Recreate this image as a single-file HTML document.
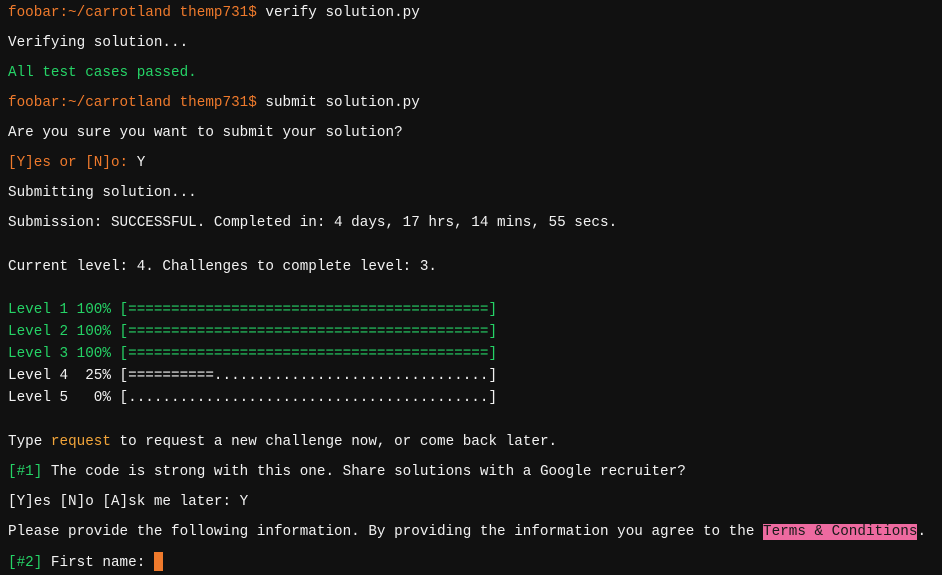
<!DOCTYPE html>
<html><head><meta charset="utf-8"><style>
html,body{margin:0;padding:0;background:#111;width:942px;height:575px;overflow:hidden}
body{font-family:"Liberation Mono","DejaVu Sans Mono",monospace;font-size:14.3px;color:#f2f2f2}
.l{position:absolute;left:8px;white-space:pre;line-height:20px;height:20px}
.o{color:#ef7a2c}.g{color:#25d366}.y{color:#f2a53a}
.t{background:#ee6aa0;color:#1a1a1a}
.cur{display:inline-block;width:9px;height:19px;background:#ef7a2c;vertical-align:-5px}
</style></head><body>
<div class="l" style="top:3px"><span class="o">foobar:~/carrotland themp731$</span> verify solution.py</div>
<div class="l" style="top:33px">Verifying solution...</div>
<div class="l g" style="top:63px">All test cases passed.</div>
<div class="l" style="top:93px"><span class="o">foobar:~/carrotland themp731$</span> submit solution.py</div>
<div class="l" style="top:123px">Are you sure you want to submit your solution?</div>
<div class="l" style="top:153px"><span class="o">[Y]es or [N]o:</span> Y</div>
<div class="l" style="top:183px">Submitting solution...</div>
<div class="l" style="top:213px">Submission: SUCCESSFUL. Completed in: 4 days, 17 hrs, 14 mins, 55 secs.</div>
<div class="l" style="top:257px">Current level: 4. Challenges to complete level: 3.</div>
<div class="l g" style="top:300px">Level 1 100% [==========================================]</div>
<div class="l g" style="top:322px">Level 2 100% [==========================================]</div>
<div class="l g" style="top:344px">Level 3 100% [==========================================]</div>
<div class="l" style="top:366px">Level 4  25% [==========................................]</div>
<div class="l" style="top:388px">Level 5   0% [..........................................]</div>
<div class="l" style="top:432px">Type <span class="y">request</span> to request a new challenge now, or come back later.</div>
<div class="l" style="top:462px"><span class="g">[#1]</span> The code is strong with this one. Share solutions with a Google recruiter?</div>
<div class="l" style="top:492px">[Y]es [N]o [A]sk me later: Y</div>
<div class="l" style="top:522px">Please provide the following information. By providing the information you agree to the <span class="t">Terms &amp; Conditions</span>.</div>
<div class="l" style="top:552px"><span class="g">[#2]</span> First name: <span class="cur"></span></div>
</body></html>
